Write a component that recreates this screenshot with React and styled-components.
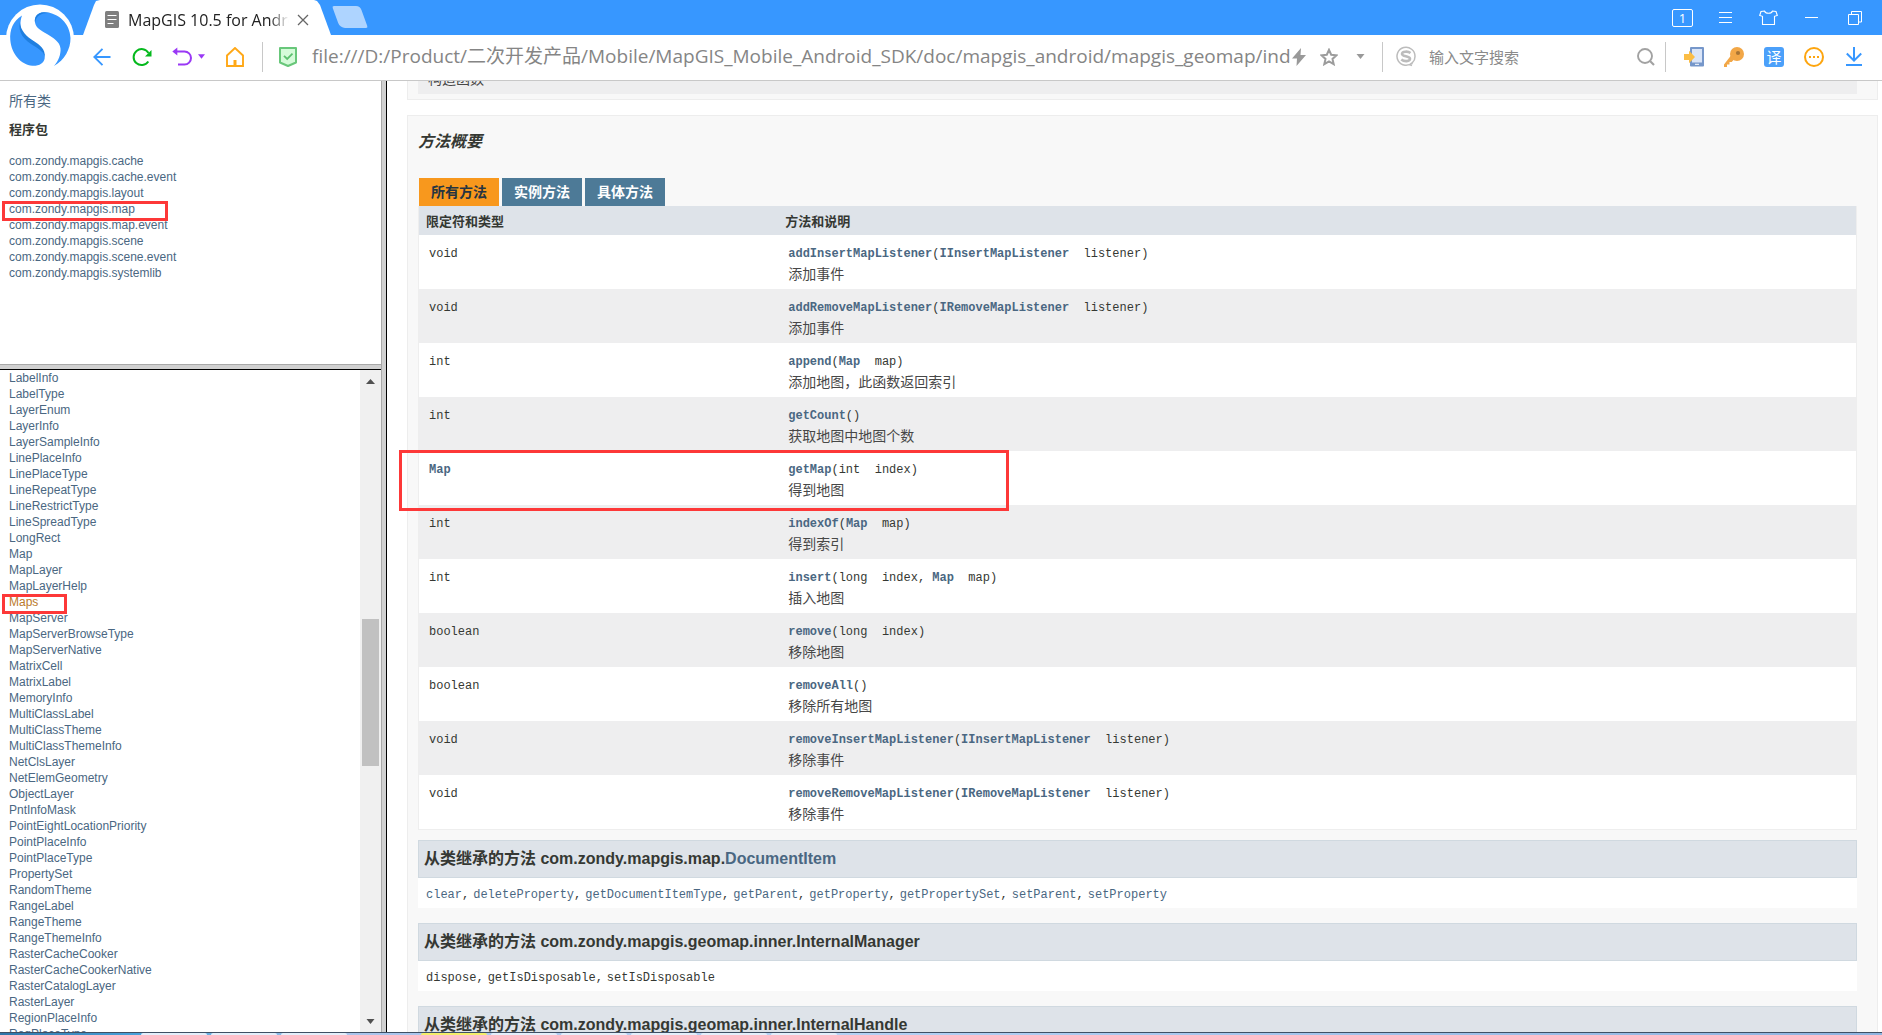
import React from "react";
import styled, { createGlobalStyle } from "styled-components";

const GlobalStyle = createGlobalStyle`
  * { box-sizing: border-box; }
  body { margin: 0; background: #fff; font-family: "Liberation Sans", Arial, "Noto Sans CJK SC", sans-serif; color: #353833; }
  button { border: 0; padding: 0; background: none; font: inherit; color: inherit; }
  a { color: #4a6782; text-decoration: none; }
  ul { list-style: none; margin: 0; padding: 0; }
`;

const Window = styled.div`
  height: 100vh;
  display: flex;
  flex-direction: column;
  overflow: hidden;
  position: relative;
`;

/* ---- browser chrome ---- */
const TitleBar = styled.header`
  height: 35px;
  flex: none;
  display: flex;
  align-items: stretch;
  padding: 0 17px 0 83px;
  background: #3797ff;
`;
const Logo = styled.svg`
  position: absolute;
  left: 0;
  top: 0;
  width: 80px;
  height: 76px;
`;
const Tab = styled.div`
  width: 248px;
  display: flex;
  align-items: center;
  padding: 4px 22px 0;
  background: #fff;
  clip-path: polygon(0 100%, 11px 5px, 13px 1px, 17px 0, 231px 0, 234px 1px, 237px 5px, 100% 100%);
`;
const TabTitle = styled.span`
  flex: 1;
  margin: 0 8px 0 9px;
  overflow: hidden;
  white-space: nowrap;
  font: 16px/24px "Open Sans", "Noto Sans CJK SC", sans-serif;
  color: #222;
  mask-image: linear-gradient(to right, #000 88%, transparent);
`;
const NewTab = styled.button`
  width: 28px;
  height: 22px;
  margin: 6px 0 0 5px;
  border-radius: 2px 4px 2px 5px;
  background: #aed4ff;
  transform: skewX(20deg);
`;
const WindowTools = styled.div`
  margin-left: auto;
  display: flex;
  align-items: center;
  gap: 22px;
`;
const ToolButton = styled.button`
  width: ${(p) => p.$w || 20}px;
  height: 22px;
  flex: none;
  display: flex;
  align-items: center;
  justify-content: center;
`;
const TabCount = styled.button`
  width: 21px;
  height: 18px;
  border: 1px solid #fff;
  border-radius: 2px;
  color: #fff;
  font: 13px/16px "Open Sans", sans-serif;
`;
const Toolbar = styled.nav`
  height: 46px;
  flex: none;
  display: flex;
  align-items: center;
  padding: 0 18px 2px 92px;
  background: #fff;
  border-bottom: 1px solid #c8c8c8;
`;
const Group = styled.div`
  display: flex;
  align-items: center;
  flex: none;
  gap: ${(p) => p.$gap}px;
`;
const Divider = styled.span`
  width: 1px;
  height: 30px;
  flex: none;
  margin: 0 ${(p) => p.$after}px 0 ${(p) => p.$before}px;
  background: #c8c8c8;
`;
const Address = styled.input`
  flex: 1;
  min-width: 0;
  height: 28px;
  margin: 0 2px 2px 14px;
  padding: 0;
  border: 0;
  outline: 0;
  background: none;
  color: #858585;
  font: 19px/28px "Open Sans", "Noto Sans CJK SC", sans-serif;
`;
const Search = styled.input`
  width: 200px;
  height: 24px;
  margin: 0 8px 0 13px;
  padding: 0;
  border: 0;
  outline: 0;
  background: none;
  font: 15px/24px "Noto Sans CJK SC", sans-serif;
  &::placeholder { color: #8a8a8a; opacity: 1; }
`;

/* ---- frames ---- */
const Frames = styled.div`
  flex: 1;
  min-height: 0;
  display: flex;
`;
const Side = styled.aside`
  width: 381px;
  flex: none;
  display: flex;
  flex-direction: column;
`;
const Splitter = styled.div`
  flex: none;
  background: #d0d0d0;
  ${(p) =>
    p.$vertical
      ? "width: 6px; border-left: 1px solid #a8a8a8; border-right: 1px solid #000;"
      : "height: 6px; border-top: 1px solid #a8a8a8; border-bottom: 1px solid #000;"}
`;
const PackagePane = styled.div`
  height: 283px;
  flex: none;
  padding: 10px 9px;
`;
const AllClasses = styled.a`
  display: block;
  font-size: 14px;
  line-height: 20px;
`;
const PackagesTitle = styled.h2`
  margin: 9px 0 13px;
  font-size: 13px;
  line-height: 20px;
`;
const NameItem = styled.li`
  position: relative;
  font-size: 12px;
  line-height: 16px;
  a { color: ${(p) => (p.$active ? "#bb7a2a" : "#4a6782")}; }
`;
const Mark = styled.span`
  position: absolute;
  z-index: 1;
  left: -7px;
  top: 0;
  width: ${(p) => p.$w}px;
  height: 20px;
  border: 3px solid #fd3838;
`;
const ClassPane = styled.div`
  flex: 1;
  min-height: 0;
  display: flex;
`;
const ClassList = styled.ul`
  && { padding-left: 9px; }
  flex: 1;
  overflow: hidden;
`;
const ScrollTrack = styled.div`
  width: 21px;
  display: flex;
  flex-direction: column;
  align-items: center;
  background: #f0f0f0;
`;
const ScrollSpace = styled.div`
  flex: ${(p) => p.$part};
`;
const ScrollThumb = styled.div`
  flex: 147;
  width: 17px;
  background: #c1c1c1;
`;

/* ---- documentation page ---- */
const Page = styled.main`
  flex: 1;
  min-width: 0;
  overflow: hidden;
  padding: 0 4px 0 20px;
`;
const Section = styled.section`
  padding: 14px 20px 14px 10px;
  background: #f8f8f8;
  border: 1px solid #ededed;
`;
const ClippedSection = styled(Section)`
  height: 19px;
  margin-bottom: 15px;
  padding-top: 0;
  padding-bottom: 5px;
  border-top: 0;
`;
const ClippedRow = styled.div`
  height: 13px;
  padding: 0 10px 5px;
  display: flex;
  align-items: flex-end;
  overflow: hidden;
  background: #eeeeef;
`;
const SectionTitle = styled.h3`
  margin: 0 0 24px;
  font-size: 16px;
  line-height: 24px;
  font-style: italic;
`;
const Tabs = styled.div`
  display: flex;
  gap: 3px;
  padding-left: 1px;
`;
const MethodTab = styled.button`
  && {
    width: 80px;
    height: 28px;
    font-size: 14px;
    font-weight: 700;
    line-height: 28px;
    background: ${(p) => (p.$active ? "#f8981d" : "#4d7a97")};
    color: ${(p) => (p.$active ? "#253441" : "#fff")};
  }
`;
const Table = styled.table`
  width: 100%;
  border-spacing: 0;
  border: 1px solid #eee;
  border-top: 0;
  table-layout: fixed;
`;
const Th = styled.th`
  width: ${(p) => p.$w};
  height: 29px;
  padding: 2px 7px 0;
  text-align: left;
  font-size: 13px;
  line-height: 20px;
  background: #dee3e9;
`;
const Tr = styled.tr`
  background: #fff;
  &:nth-child(even) { background: #eeeeef; }
`;
const Td = styled.td`
  position: relative;
  padding: 9px 10px 5px;
  vertical-align: top;
`;
const RowMark = styled.span`
  position: absolute;
  z-index: 1;
  left: -20px;
  top: -1px;
  width: 610px;
  height: 61px;
  border: 3px solid #fd3838;
`;
const Code = styled.code`
  display: block;
  font: 12px/20px "Liberation Mono", "Courier New", monospace;
  a { font-weight: 700; }
`;
const Desc = styled.div`
  font-size: 14px;
  line-height: 20px;
  color: #474747;
`;
const InheritTitle = styled.h3`
  margin: ${(p) => p.$top}px 0 0;
  height: 38px;
  padding: 0 5px;
  font-size: 16px;
  line-height: 36px;
  white-space: nowrap;
  background: #dee3e9;
  border: 1px solid #d0d9e0;
`;
const InheritList = styled.code`
  display: flex;
  gap: 4px;
  height: 30px;
  padding: 0 8px;
  font: 12px/34px "Liberation Mono", "Courier New", monospace;
  background: #fff;
`;

/* ---- task bar edge ---- */
const TaskBar = styled.footer`
  height: 3px;
  flex: none;
  display: flex;
  gap: 4px;
  border-top: 1px solid #3f5064;
  background: linear-gradient(to right, #2f75a8, #4aa3dc 141px, #a9c4ec 347px, #b4d2f5 840px, #8fb4e0);
`;
const Task = styled.span`
  width: 66px;
  border-radius: 2px 2px 0 0;
  margin-left: ${(p) => p.$gap || 0}px;
  background: ${(p) => (p.$alert ? "#f5ee6a" : "#e4effb")};
`;

const packages = ["cache", "cache.event", "layout", "map", "map.event", "scene", "scene.event", "systemlib"];

const classes = `LabelInfo LabelType LayerEnum LayerInfo LayerSampleInfo LinePlaceInfo LinePlaceType
LineRepeatType LineRestrictType LineSpreadType LongRect Map MapLayer MapLayerHelp Maps MapServer
MapServerBrowseType MapServerNative MatrixCell MatrixLabel MemoryInfo MultiClassLabel MultiClassTheme
MultiClassThemeInfo NetClsLayer NetElemGeometry ObjectLayer PntInfoMask PointEightLocationPriority
PointPlaceInfo PointPlaceType PropertySet RandomTheme RangeLabel RangeTheme RangeThemeInfo
RasterCacheCooker RasterCacheCookerNative RasterCatalogLayer RasterLayer RegionPlaceInfo RegPlaceType`.split(/\s+/);

// Each argument is [type, name, linked].
const methods = [
  ["void", "addInsertMapListener", [["IInsertMapListener", "listener", true]], "添加事件"],
  ["void", "addRemoveMapListener", [["IRemoveMapListener", "listener", true]], "添加事件"],
  ["int", "append", [["Map", "map", true]], "添加地图，此函数返回索引"],
  ["int", "getCount", [], "获取地图中地图个数"],
  ["Map", "getMap", [["int", "index"]], "得到地图"],
  ["int", "indexOf", [["Map", "map", true]], "得到索引"],
  ["int", "insert", [["long", "index"], ["Map", "map", true]], "插入地图"],
  ["boolean", "remove", [["long", "index"]], "移除地图"],
  ["boolean", "removeAll", [], "移除所有地图"],
  ["void", "removeInsertMapListener", [["IInsertMapListener", "listener", true]], "移除事件"],
  ["void", "removeRemoveMapListener", [["IRemoveMapListener", "listener", true]], "移除事件"],
];

const inherited = ["clear", "deleteProperty", "getDocumentItemType", "getParent", "getProperty", "getPropertySet", "setParent", "setProperty"];
const managerMethods = ["dispose", "getIsDisposable", "setIsDisposable"];

const comma = (i, list) => (i < list.length - 1 ? "," : "");

const Caret = ({ color, w = 8 }) => (
  <svg width={w} height="5" viewBox="0 0 8 5"><path d="M0 0h8L4 5z" fill={color} /></svg>
);

function BrowserLogo() {
  return (
    <Logo viewBox="0 0 80 76" aria-hidden="true">
      <circle cx="40" cy="38.500" r="34" fill="#fff" />
      <path d="M22 15.500C13 21 9.500 30 10.300 40c1 14 11 25 22 25.700 7 .3 11.500-2.500 12.400-7.500.8-6-3.500-9.500-9.700-13.500C25 39 17 29 22 15.500z" fill="#3797ff" />
      <path d="M19.800 22c-2 11 4 18 15.200 24.500 5.500 3.500 9 6 9.700 10.500 1-8-5-12-11-16-7-4.500-13-10-13.900-19z" fill="#1f7fe0" />
      <path d="M35 22.500C34 17 37 12.500 44 12.200c15 .3 26 11.500 26.500 25.800.2 11-6 22-16.500 28 4.500-5 7-12 6.500-17.500-.8-7-7-10.500-13.500-14.500-6-3.500-11-6-12-11.500z" fill="#3797ff" />
      <path d="M35 22.500C34 17 37 12.500 44 12.200c2 0 4 .3 6 .8-8-.5-13.500 2-15 9.500z" fill="#1f7fe0" />
    </Logo>
  );
}

function Chrome() {
  return (
    <>
      <TitleBar>
        <Tab>
          <svg width="14" height="17" viewBox="0 0 14 17"><rect width="14" height="17" rx="1.500" fill="#7f7f7f" /><path d="M2.500 4.500h9M2.500 8.500h9M2.500 12.500h6" stroke="#fff" strokeWidth="1.200" /></svg>
          <TabTitle>MapGIS 10.5 for Android</TabTitle>
          <ToolButton $w={12} aria-label="关闭标签">
            <svg width="12" height="12" viewBox="0 0 12 12"><path d="M1 1l10 10M11 1L1 11" stroke="#666" strokeWidth="1.300" /></svg>
          </ToolButton>
        </Tab>
        <NewTab aria-label="新标签" />
        <WindowTools>
          <TabCount>1</TabCount>
          <ToolButton $w={21} aria-label="菜单"><svg width="13" height="12" viewBox="0 0 13 12"><path d="M0 .5h13M0 5.500h13M0 10.500h13" stroke="#fff" /></svg></ToolButton>
          <ToolButton $w={21} aria-label="皮肤"><svg width="19" height="16" viewBox="0 0 19 16"><path d="M5.500 1C6.500 4 12.500 4 13.500 1L17 1.500l1.300 4-2.800.8V14.500h-12V6.300L.7 5.500 2 1.500z" fill="none" stroke="#fff" strokeWidth="1.100" /></svg></ToolButton>
          <ToolButton $w={21} aria-label="最小化"><svg width="13" height="3" viewBox="0 0 13 3"><path d="M0 1.500h13" stroke="#fff" /></svg></ToolButton>
          <ToolButton $w={21} aria-label="还原"><svg width="14" height="14" viewBox="0 0 14 14"><path d="M.5 3.500h10v10H.5zM3.500 3.500v-3h10v10.500h-3" fill="none" stroke="#fff" /></svg></ToolButton>
        </WindowTools>
      </TitleBar>
      <Toolbar>
        <Group $gap={20}>
          <ToolButton aria-label="后退"><svg width="18" height="18" viewBox="0 0 18 18"><path d="M17.500 9H1.500M9.500 .8L1.300 9l8.200 8.200" fill="none" stroke="#3797ff" strokeWidth="1.900" /></svg></ToolButton>
          <ToolButton aria-label="刷新"><svg width="20" height="20" viewBox="0 0 20 20"><path d="M16.300 14.500A8 8 0 1 1 16.500 6" fill="none" stroke="#05b91d" strokeWidth="2" /><path d="M19.500 3v6.500H13z" fill="#05b91d" /></svg></ToolButton>
          <Group $gap={6}>
            <ToolButton aria-label="撤销"><svg width="20" height="20" viewBox="0 0 20 20"><path d="M5 4.500h7.500a6.500 6.500 0 0 1 0 13H6" fill="none" stroke="#9a38f5" strokeWidth="2" /><path d="M.3 4.500L5.300.5v8z" fill="#9a38f5" /></svg></ToolButton>
            <Caret color="#9a38f5" w={7} />
          </Group>
          <ToolButton aria-label="主页"><svg width="18" height="20" viewBox="0 0 18 20"><path d="M1 8.500L9 1l8 7.500V19H1z" fill="none" stroke="#ffa817" strokeWidth="1.900" /><path d="M9 13v6" stroke="#ffa817" strokeWidth="3" /></svg></ToolButton>
        </Group>
        <Divider $before={17} $after={15} />
        <svg width="20" height="22" viewBox="0 0 20 22"><path d="M2 2h16v14.500L10 20l-8-3.500z" fill="#d5fbd9" stroke="#68c77a" strokeWidth="2" strokeLinejoin="round" /><path d="M6 9.800l3.200 3.200 5.300-5.300" fill="none" stroke="#5cc06f" strokeWidth="1.800" /></svg>
        <Address aria-label="地址" readOnly value="file:///D:/Product/二次开发产品/Mobile/MapGIS_Mobile_Android_SDK/doc/mapgis_android/mapgis_geomap/ind" />
        <Group $gap={14}>
          <ToolButton $w={14} aria-label="极速模式"><svg width="14" height="18" viewBox="0 0 14 18"><path d="M9 0L0 10.500h5L4.500 18 14 7H8.500z" fill="#999" /></svg></ToolButton>
          <ToolButton $w={18} aria-label="收藏"><svg width="18" height="18" viewBox="0 0 18 18"><path d="M9 1.800l2.200 4.900 5.300.6-4 3.600 1.200 5.300L9 13.500l-4.700 2.700 1.200-5.300-4-3.600 5.300-.6z" fill="none" stroke="#9c9c9c" strokeWidth="2" /></svg></ToolButton>
        </Group>
        <ToolButton $w={44} aria-label="更多"><Caret color="#999" w={9} /></ToolButton>
        <Divider $before={0} $after={13} />
        <svg width="20" height="21" viewBox="0 0 20 21"><path d="M16.500 16.500A9 9 0 1 1 19 10.500c0 3-.8 4.500-2.500 6l-1 1.500M14 18.700l2 .8" fill="none" stroke="#bcbcbc" strokeWidth="1.500" /><path d="M14.500 7C12 5 6 5.200 6 8s8 1.800 8 4.800-6 3-8.700.7" fill="none" stroke="#bcbcbc" strokeWidth="2.600" /></svg>
        <Search aria-label="搜索" placeholder="输入文字搜索" />
        <ToolButton $w={18} aria-label="开始搜索"><svg width="18" height="18" viewBox="0 0 18 18"><circle cx="8" cy="8" r="7" fill="none" stroke="#a2a2a2" strokeWidth="1.900" /><path d="M13 13l4 4" stroke="#a2a2a2" strokeWidth="2.200" /></svg></ToolButton>
        <Divider $before={10} $after={18} />
        <Group $gap={20}>
          <ToolButton aria-label="手机"><svg width="20" height="20" viewBox="0 0 20 20"><rect x="6" y="0" width="14" height="19.500" rx="1" fill="#7697ca" /><rect x="8" y="2" width="10" height="13.500" fill="#dae5f8" /><path d="M11 17.300h4" stroke="#fff" /><path d="M0 7h5V3.800l6 6.200-6 6.200V13H0z" fill="#fbbd45" /></svg></ToolButton>
          <ToolButton aria-label="密码"><svg width="20" height="20" viewBox="0 0 20 20"><path d="M7 8.500L0 17.500V20h3v-2.500h2.500V15h2.200l2.300-2.500z" fill="#f2a747" /><circle cx="13" cy="7" r="7" fill="#f2a747" /><circle cx="14" cy="6" r="2.100" fill="#a87434" /></svg></ToolButton>
          <ToolButton aria-label="翻译"><svg width="20" height="20" viewBox="0 0 20 20"><rect width="20" height="20" rx="3" fill="#4ba0fa" /><text x="10" y="15.500" textAnchor="middle" fontSize="15" fill="#fff" fontFamily="Noto Sans CJK SC">译</text></svg></ToolButton>
          <ToolButton aria-label="更多工具"><svg width="20" height="20" viewBox="0 0 20 20"><circle cx="10" cy="10" r="9" fill="none" stroke="#fda50f" strokeWidth="2" /><path d="M5 10h2M9 10h2M13 10h2" stroke="#fda50f" strokeWidth="2" /></svg></ToolButton>
          <ToolButton aria-label="下载"><svg width="18" height="20" viewBox="0 0 18 20"><path d="M9 0v14M1.800 6.500L9 13.700l7.200-7.200" fill="none" stroke="#3797ff" strokeWidth="2" /><path d="M1 18h16" stroke="#3797ff" strokeWidth="2" /></svg></ToolButton>
        </Group>
      </Toolbar>
      <BrowserLogo />
    </>
  );
}

function SideFrames() {
  return (
    <Side>
      <PackagePane>
        <AllClasses href="#all">所有类</AllClasses>
        <PackagesTitle>程序包</PackagesTitle>
        <ul>
          {packages.map((name) => (
            <NameItem key={name}>
              <a href={"#" + name}>com.zondy.mapgis.{name}</a>
              {name === "map" && <Mark $w={166} />}
            </NameItem>
          ))}
        </ul>
      </PackagePane>
      <Splitter />
      <ClassPane>
        <ClassList>
          {classes.map((name) => (
            <NameItem key={name} $active={name === "Maps"}>
              <a href={"#" + name}>{name}</a>
              {name === "Maps" && <Mark $w={65} />}
            </NameItem>
          ))}
        </ClassList>
        <ScrollTrack>
          <ToolButton $w={21} aria-label="向上"><svg width="9" height="5" viewBox="0 0 9 5"><path d="M0 5h9L4.500 0z" fill="#505050" /></svg></ToolButton>
          <ScrollSpace $part={227} />
          <ScrollThumb />
          <ScrollSpace $part={244} />
          <ToolButton $w={21} aria-label="向下"><Caret color="#505050" w={9} /></ToolButton>
        </ScrollTrack>
      </ClassPane>
    </Side>
  );
}

function MethodRow({ type, name, args, desc }) {
  return (
    <Tr>
      <Td>
        <Code>{type === "Map" ? <a href="#Map">Map</a> : type}</Code>
        {name === "getMap" && <RowMark />}
      </Td>
      <Td>
        <Code>
          <a href={"#" + name}>{name}</a>(
          {args.map(([t, n, linked], i) => (
            <React.Fragment key={n}>
              {linked ? <a href={"#" + t}>{t}</a> : t}
              {"\u00a0\u00a0" + n + (i < args.length - 1 ? ", " : "")}
            </React.Fragment>
          ))}
          )
        </Code>
        <Desc>{desc}</Desc>
      </Td>
    </Tr>
  );
}

export default function App() {
  return (
    <Window>
      <GlobalStyle />
      <Chrome />
      <Frames>
        <SideFrames />
        <Splitter $vertical />
        <Page>
          <ClippedSection>
            <ClippedRow><Desc>构造函数</Desc></ClippedRow>
          </ClippedSection>
          <Section>
            <SectionTitle>方法概要</SectionTitle>
            <Tabs>
              <MethodTab $active>所有方法</MethodTab>
              <MethodTab>实例方法</MethodTab>
              <MethodTab>具体方法</MethodTab>
            </Tabs>
            <Table>
              <thead>
                <tr>
                  <Th $w="25%">限定符和类型</Th>
                  <Th $w="75%">方法和说明</Th>
                </tr>
              </thead>
              <tbody>
                {methods.map(([type, name, args, desc]) => (
                  <MethodRow key={name} type={type} name={name} args={args} desc={desc} />
                ))}
              </tbody>
            </Table>
            <InheritTitle $top={10}>从类继承的方法 com.zondy.mapgis.map.<a href="#DocumentItem">DocumentItem</a></InheritTitle>
            <InheritList>
              {inherited.map((m, i) => (
                <span key={m}><a href={"#" + m}>{m}</a>{comma(i, inherited)}</span>
              ))}
            </InheritList>
            <InheritTitle $top={15}>从类继承的方法 com.zondy.mapgis.geomap.inner.InternalManager</InheritTitle>
            <InheritList>
              {managerMethods.map((m, i) => (
                <span key={m}>{m}{comma(i, managerMethods)}</span>
              ))}
            </InheritList>
            <InheritTitle $top={15}>从类继承的方法 com.zondy.mapgis.geomap.inner.InternalHandle</InheritTitle>
          </Section>
        </Page>
      </Frames>
      <TaskBar>
        <Task $gap={141} />
        <Task />
        <Task />
        <Task $gap={70} $alert />
        <Task />
        <Task />
        <Task />
        <Task />
        <Task />
      </TaskBar>
    </Window>
  );
}
